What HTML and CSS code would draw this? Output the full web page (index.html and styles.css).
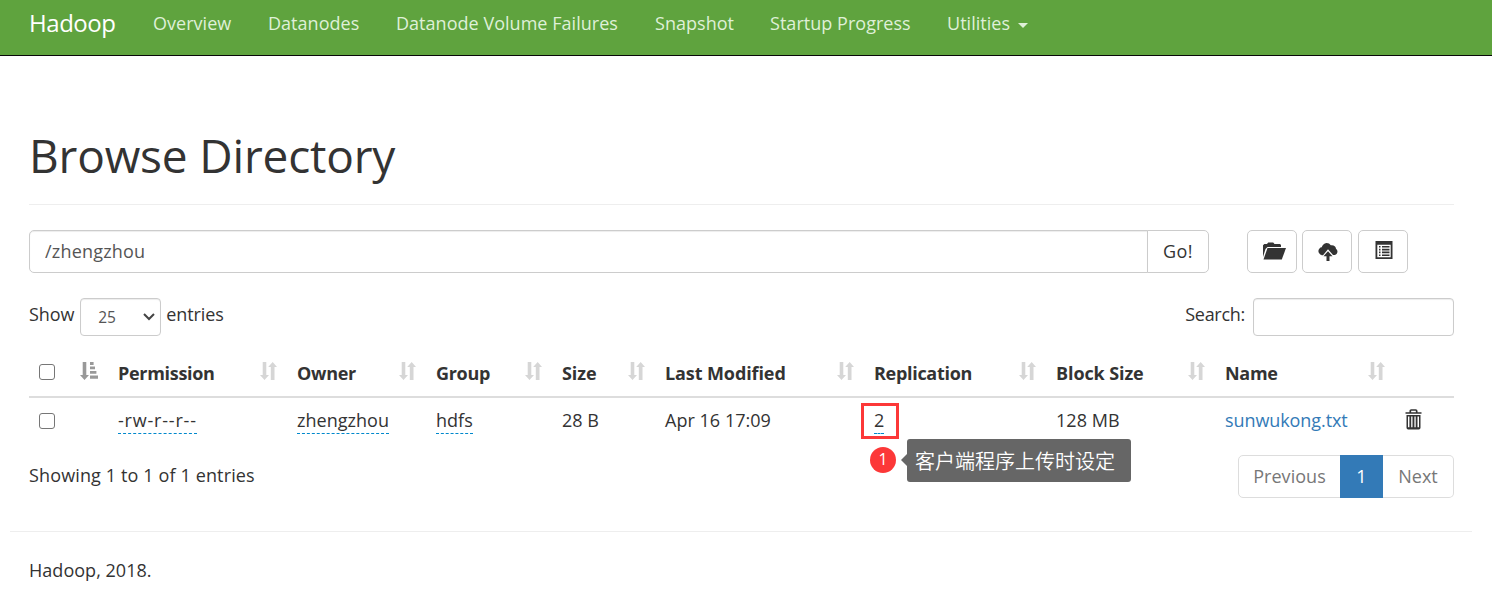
FILE: index.html
```html
<!DOCTYPE html>
<html lang="en">
<head>
<meta charset="utf-8">
<title>Browsing HDFS</title>
<link rel="stylesheet" href="styles.css">
</head>
<body>
<svg class="defs" aria-hidden="true">
  <symbol id="sort" viewBox="0 0 17 18">
    <path d="M2.7 0h3.6v13H9L4.5 18 0 13h2.7zM10.8 18h3.7V5H17L12.7 0 8.2 5h2.6z"/>
  </symbol>
  <symbol id="sort-asc" viewBox="0 0 18 18">
    <path d="M2.7 0h3.6v13H9L4.5 18 0 13h2.7zM10 0h3.6v3H10zM10 4.5h5v2.7h-5zM10 9h6.4v2.7H10zM10 13.5h8v3.2h-8z"/>
  </symbol>
</svg>
<header class="navbar">
  <a class="brand">Hadoop</a>
  <nav class="menu">
    <a class="n1">Overview</a><a class="n2">Datanodes</a><a class="n3">Datanode Volume Failures</a><a class="n4">Snapshot</a><a class="n5">Startup Progress</a><a class="n6">Utilities <i class="caret"></i></a>
  </nav>
</header>
<main class="content">
  <h1>Browse Directory</h1>
  <div class="pathbar">
    <div class="group"><input class="path" value="/zhengzhou"><button class="go">Go!</button></div>
    <div class="actions">
      <button><svg width="24" height="18" viewBox="0 0 24 18"><path d="M1 15V3.2L2.3 2H5l1.2-1.5h5L12.5 2H18l1 1v2H5.5L3.5 7z"/><path d="M5.5 6H24l-4.2 11.5H1.5z"/></svg></button>
      <button><svg width="20" height="20" viewBox="0 0 20 20"><path d="M4.5 13.2a4 4 0 0 1-3-6.7 3 3 0 0 1 2.2-1.2A6 6 0 0 1 8.5 1a5 5 0 0 1 4.3 2.3A4.8 4.8 0 0 1 17 4.5a4 4 0 0 1 1 2.2A3.6 3.6 0 0 1 17 13h-2L10 7.3 5 13.2z"/><path d="M10 9.2l4.5 5h-3V19h-3v-4.8h-3z"/></svg></button>
      <button><svg width="18" height="18" viewBox="0 0 18 18"><path fill-rule="evenodd" d="M.5 0h17v18H.5zM2.3 3.7v12.5h13.4V3.7z"/><path d="M4 5h1.5v1.6H4zM7 5h7.5v1.6H7zM4 7.8h1.5v1.6H4zM7 7.8h7.5v1.6H7zM4 10.6h1.5v1.6H4zM7 10.6h7.5v1.6H7zM4 13.4h1.5V15H4zM7 13.4h7.5V15H7z"/></svg></button>
    </div>
  </div>
  <div class="controls">
    <label class="length">Show <span class="select">25<svg width="12" height="8" viewBox="0 0 12 8"><path d="M1 1l5 5 5-5"/></svg></span> entries</label>
    <label class="search">Search:<input></label>
  </div>
  <table>
    <colgroup><col class="c1"><col class="c2"><col class="c3"><col class="c4"><col class="c5"><col class="c6"><col class="c7"><col class="c8"><col class="c9"><col></colgroup>
    <thead><tr>
      <th><div><i class="check"></i><svg class="asc"><use href="#sort-asc"/></svg></div></th>
      <th><div><span>Permission</span><svg><use href="#sort"/></svg></div></th>
      <th><div><span>Owner</span><svg><use href="#sort"/></svg></div></th>
      <th><div><span>Group</span><svg><use href="#sort"/></svg></div></th>
      <th><div><span class="wide">Size</span><svg><use href="#sort"/></svg></div></th>
      <th><div><span class="wide">Last Modified</span><svg><use href="#sort"/></svg></div></th>
      <th><div><span>Replication</span><svg><use href="#sort"/></svg></div></th>
      <th><div><span class="wide">Block Size</span><svg><use href="#sort"/></svg></div></th>
      <th><div><span>Name</span><svg><use href="#sort"/></svg></div></th>
      <th></th>
    </tr></thead>
    <tbody><tr>
      <td class="pick"><i class="check"></i></td>
      <td><span class="edit perm">-rw-r--r--</span></td>
      <td><span class="edit">zhengzhou</span></td>
      <td><span class="edit">hdfs</span></td>
      <td>28 B</td>
      <td>Apr 16 17:09</td>
      <td><span class="edit">2</span></td>
      <td>128 MB</td>
      <td><a class="file">sunwukong.txt</a></td>
      <td class="remove"><svg class="trash" width="17" height="21" viewBox="0 0 17 21"><path d="M.5 4h16M5.3 3.6V2q0-1 1-1h4.4q1 0 1 1v1.6" fill="none" stroke="#333" stroke-width="1.7"/><path fill-rule="evenodd" d="M1.5 6h14v12.8q0 1.7-1.7 1.7H3.2q-1.7 0-1.7-1.7zM3 7.5v10.8h1.4V7.5zM6.2 7.5v10.8h1.3V7.5zM9.4 7.5v10.8h1.3V7.5zM12.5 7.5v10.8H14V7.5z"/></svg></td>
    </tr></tbody>
  </table>
  <div class="summary">
    <div class="info">Showing 1 to 1 of 1 entries</div>
    <div class="pages"><a>Previous</a><a class="current">1</a><a>Next</a></div>
  </div>
</main>
<footer>Hadoop, 2018.</footer>
<div class="mark"></div>
<div class="badge">1</div>
<div class="note">客户端程序上传时设定</div>
</body>
</html>
```
FILE: styles.css
```css
* { box-sizing: border-box; }
body {
  margin: 0;
  height: 592px;
  position: relative;
  overflow: hidden;
  background: #fff;
  color: #333;
  font: 18px/26px "Open Sans", "Noto Sans CJK SC", sans-serif;
  letter-spacing: .03px;
}
input, button { font: inherit; letter-spacing: inherit; color: inherit; outline: 0; }
.defs { display: none; }
.navbar {
  display: flex;
  height: 56px;
  padding: 10px 29px 0;
  background: #5fa33e;
  border-bottom: 1px solid #080808;
}
.brand { width: 124px; font-size: 24px; letter-spacing: -.45px; color: #fff; }
.menu { display: flex; color: #dff0d8; white-space: nowrap; }
.n1 { width: 115px; }
.n2 { width: 128px; }
.n3 { width: 259px; }
.n4 { width: 115px; }
.n5 { width: 177px; }
.caret {
  display: inline-block;
  border: 5px solid transparent;
  border-top-color: currentColor;
  border-bottom: 0;
  vertical-align: 2px;
  margin-left: 3px;
}
.content { padding: 0 38px 0 29px; }
h1 {
  height: 149px;
  margin: 0 0 25px;
  padding-top: 69px;
  border-bottom: 1px solid #eee;
  font-size: 46px;
  line-height: 60px;
  font-weight: 400;
  letter-spacing: -.18px;
}
.pathbar { display: flex; gap: 38px; height: 43px; }
.group { display: flex; width: 1180px; }
.path {
  flex: 1;
  border: 1px solid #ccc;
  border-radius: 5px 0 0 5px;
  padding: 0 15px 2px;
  color: #555;
  letter-spacing: .2px;
  box-shadow: inset 0 1px 1px rgba(0,0,0,.075);
}
.go {
  width: 62px;
  margin-left: -1px;
  padding: 0 0 2px;
  border: 1px solid #ccc;
  border-radius: 0 5px 5px 0;
  background: #fff;
  letter-spacing: .4px;
}
.actions { display: flex; gap: 5.4px; }
.actions button {
  display: flex;
  align-items: center;
  justify-content: center;
  width: 50px;
  padding: 0 0 2px;
  border: 1px solid #ccc;
  border-radius: 5px;
  background: #fff;
}
.actions svg { fill: #333; }
.actions button:first-child svg { margin-left: 4px; }
.actions button:nth-child(2) { padding: 2px 0 2px 2px; }
.actions button:nth-child(3) { padding: 0 0 4px 2px; }
.controls { display: flex; justify-content: space-between; margin-top: 25px; height: 38px; line-height: 33px; }
.length { display: flex; letter-spacing: -.1px; }
.search { display: flex; letter-spacing: -.28px; }
.select {
  display: flex;
  align-items: center;
  justify-content: space-between;
  width: 81px;
  height: 38px;
  margin: 0 5px 0 6px;
  padding: 0 5px 0 17px;
  border: 1px solid #ccc;
  border-radius: 4px;
  font-size: 15.5px;
  color: #555;
  box-shadow: inset 0 1px 1px rgba(0,0,0,.075);
}
.select svg { fill: none; stroke: #444; stroke-width: 2; }
.search input {
  width: 201px;
  height: 38px;
  margin-left: 8px;
  border: 1px solid #ccc;
  border-radius: 4px;
  box-shadow: inset 0 1px 1px rgba(0,0,0,.075);
}
table { width: 1425px; margin-top: 13px; table-layout: fixed; border-collapse: separate; border-spacing: 0; }
.c1 { width: 79px; }
.c2 { width: 179px; }
.c3 { width: 139px; }
.c4 { width: 126px; }
.c5 { width: 103px; }
.c6 { width: 209px; }
.c7 { width: 182px; }
.c8 { width: 169px; }
.c9 { width: 180px; }
th { height: 49px; padding: 0 10.5px 0 10px; border-bottom: 2px solid #ddd; text-align: left; font-weight: 700; white-space: nowrap; letter-spacing: -.3px; }
th div { display: flex; justify-content: space-between; align-items: center; }
th span { padding-top: 1px; }
.wide { letter-spacing: -.1px; }
th svg { width: 17px; height: 18px; margin-bottom: 3px; fill: #d6d6d6; flex: none; }
th .asc { width: 18px; fill: #999; }
th .check { margin-bottom: 2px; }
td { height: 46px; padding: 0 10px 2px; white-space: nowrap; vertical-align: middle; }
.pick, .remove { padding-bottom: 0; }
.check { display: block; width: 16px; height: 16px; border: 1px solid #767676; border-radius: 3px; }
.edit { display: inline-block; border-bottom: 1px dashed #08c; line-height: 26px; }
.perm { letter-spacing: .8px; }
.file { color: #337ab7; letter-spacing: -.08px; }
.trash { display: block; fill: #333; margin-bottom: 3px; }
.summary { display: flex; justify-content: space-between; margin-top: 11px; }
.info { line-height: 41px; letter-spacing: .13px; }
.pages { display: flex; width: 216px; height: 43px; color: #777; line-height: 41px; }
.pages a { flex: 1 0 auto; border: 1px solid #ddd; text-align: center; }
.pages a:first-child { flex: 0 0 103px; border-radius: 5px 0 0 5px; }
.pages a:last-child { border-radius: 0 5px 5px 0; border-left: 0; }
.pages .current { flex: 0 0 43px; margin-left: -1px; border-color: #337ab7; background: #337ab7; color: #fff; }
footer { margin: 33px 20px 0 10px; padding: 25px 19px 0; border-top: 1px solid #eee; }
.mark { position: absolute; left: 861px; top: 403px; width: 38px; height: 36px; border: 3px solid #fc3838; }
.badge {
  position: absolute;
  left: 870px;
  top: 447px;
  width: 26px;
  height: 26px;
  border-radius: 50%;
  background: #fc3838;
  color: #fff;
  font-size: 16px;
  line-height: 24px;
  text-align: center;
}
.note {
  position: absolute;
  left: 907px;
  top: 439px;
  width: 224px;
  height: 43px;
  padding-left: 8px;
  border-radius: 3px;
  background: #666;
  color: #fff;
  font: 350 20px/43px "Noto Sans CJK SC", sans-serif;
  letter-spacing: 0;
  white-space: nowrap;
}
.note::before {
  content: "";
  position: absolute;
  left: -6px;
  top: 15px;
  border: 6px solid transparent;
  border-left: 0;
  border-right-color: #666;
}
```
